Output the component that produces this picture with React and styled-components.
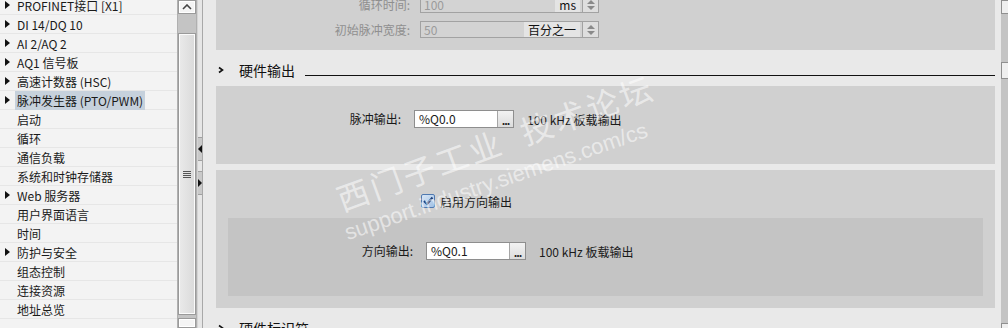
import React from "react";
import styled, { createGlobalStyle } from "styled-components";

const Global = createGlobalStyle`
  html, body { margin: 0; padding: 0; background: #e9e9e9; }
  body { font-family: "Noto Sans CJK SC", "Noto Sans", sans-serif; font-size: 12px; color: #1a1a1a; }
  * { box-sizing: border-box; }
`;

const Root = styled.div`
  display: flex;
  width: 1008px;
  height: 328px;
  overflow: hidden;
`;

/* ---------- left tree ---------- */
const TreePanel = styled.div`
  display: flex;
  width: 197px;
  background: #f3f3f3;
`;
const TreeList = styled.ul`
  list-style: none;
  margin: -4px 0 0;
  padding: 0;
  flex: 1;
  overflow: hidden;
`;
const TreeItem = styled.li`
  display: flex;
  align-items: center;
  height: 19px;
  padding-left: 5px;
  border-bottom: 1px solid #e6e6e6;
  line-height: 17px;
  white-space: nowrap;
`;
const Arrow = styled.span`
  width: 10px;
  height: 8px;
  flex: none;
  &::before {
    content: "";
    display: ${(p) => (p.$show ? "block" : "none")};
    width: 0;
    height: 0;
    border-left: 5px solid #111;
    border-top: 4px solid transparent;
    border-bottom: 4px solid transparent;
  }
`;
const TreeLabel = styled.span`
  padding: 1px 2px;
  background: ${(p) => (p.$selected ? "#c6d1dc" : "transparent")};
  color: #1a1a1a;
`;

const VScroll = styled.div`
  width: 20px;
  flex: none;
  display: flex;
  flex-direction: column;
  background: #c4c4c4;
  border-left: 1px solid #b0b0b0;
  border-right: 1px solid #b0b0b0;
`;
const ScrollBtn = styled.div`
  height: ${(p) => p.$h}px;
  flex: none;
  background: #f4f4f4;
  border: 1px solid #9a9a9a;
  box-shadow: inset 0 0 0 1px #fff;
  display: flex;
  align-items: center;
  justify-content: center;
`;
const ScrollGap = styled.div`
  height: ${(p) => p.$h}px;
  flex: none;
`;
const Thumb = styled.div`
  flex: 1;
  margin-bottom: 3px;
  border: 1px solid #9a9a9a;
  box-shadow: inset 0 0 0 1px #fbfbfb;
  background: linear-gradient(90deg, #eaeaea, #dadada);
  display: flex;
  align-items: center;
  justify-content: center;
`;
const Grip = styled.div`
  width: 8px;
  height: 7px;
  border-top: 1px solid #555;
  border-bottom: 1px solid #555;
  position: relative;
  &::before, &::after {
    content: "";
    position: absolute;
    left: 0;
    right: 0;
    height: 1px;
    background: #555;
  }
  &::before { top: 1px; }
  &::after { top: 3px; }
`;

/* ---------- splitter ---------- */
const Splitter = styled.div`
  width: 6px;
  flex: none;
  background: #e6e6e6;
  border-right: 1px solid #a8a8a8;
  border-left: 1px solid #d4d4d4;
  display: flex;
  flex-direction: column;
  padding-top: 137px;
  gap: 10px;
`;
const SplitBtn = styled.div`
  height: 24px;
  background: #c9c9c9;
  border-top: 1px solid #a0a0a0;
  border-bottom: 1px solid #a0a0a0;
  display: flex;
  align-items: center;
  justify-content: ${(p) => (p.$dir === "left" ? "flex-end" : "flex-start")};
  &::before {
    content: "";
    width: 0;
    height: 0;
    border-top: 4px solid transparent;
    border-bottom: 4px solid transparent;
    ${(p) => (p.$dir === "left" ? "border-right: 4px solid #111;" : "border-left: 4px solid #111;")}
  }
`;

/* ---------- content ---------- */
const Content = styled.div`
  flex: 1;
  position: relative;
  overflow: hidden;
  background: #e9e9e9;
  padding: 0 6px 0 13px;
`;
const Scroller = styled.div`
  margin-top: -10px;
  display: flex;
  flex-direction: column;
`;
const Panel = styled.div`
  background: #d0d0d0;
  height: ${(p) => p.$h}px;
  padding-top: ${(p) => p.$pt}px;
  margin-top: ${(p) => p.$mt || 0}px;
  display: flex;
  flex-direction: column;
`;
const InnerPanel = styled.div`
  background: #c4c4c4;
  margin: 10px 12px 0;
  height: 78px;
  padding-top: 24px;
`;

const TopRows = styled.div`
  display: grid;
  grid-template-columns: 194px 179px;
  column-gap: 10px;
  row-gap: 8px;
`;
const DimLabel = styled.div`
  text-align: right;
  color: #8f8f8f;
  line-height: 17px;
`;
const FieldBox = styled.div`
  display: flex;
  height: 17px;
  border: 1px solid #a2a2a2;
  background: #d3d3d3;
`;
const FieldValue = styled.div`
  flex: 1;
  padding-left: 3px;
  color: #9b9b9b;
  line-height: 15px;
`;
const Unit = styled.div`
  background: #e4e4e4;
  color: #111;
  padding: 0 4px;
  line-height: 15px;
  margin-right: 2px;
`;
const Spinner = styled.div`
  width: 16px;
  border-left: 1px solid #a2a2a2;
  background: #dedede;
  display: flex;
  flex-direction: column;
  align-items: center;
  justify-content: center;
  gap: 2px;
`;
const Tri = styled.span`
  width: 0;
  height: 0;
  border-left: 4px solid transparent;
  border-right: 4px solid transparent;
  ${(p) => (p.$up ? "border-bottom: 4px solid #8a8a8a;" : "border-top: 4px solid #8a8a8a;")}
`;

const SectionHeader = styled.div`
  height: 36px;
  padding: 12px 0 0 2px;
  display: flex;
  align-items: flex-start;
`;
const Chevron = styled.svg`
  width: 6px;
  height: 16px;
  flex: none;
`;
const SectionTitle = styled.div`
  font-size: 14px;
  line-height: 16px;
  margin: 0 10px 0 15px;
  color: #111;
  white-space: nowrap;
`;
const SectionLine = styled.div`
  flex: 1;
  height: 14px;
  border-bottom: 1px solid #111;
`;

const FormRow = styled.div`
  display: grid;
  grid-template-columns: 185px 100px auto;
  column-gap: 13px;
  align-items: center;
`;
const Label = styled.div`
  text-align: right;
  color: #1a1a1a;
  line-height: 18px;
`;
const Input = styled.div`
  display: flex;
  height: 18px;
  border: 1px solid #8e8e8e;
  background: #fff;
`;
const InputValue = styled.div`
  flex: 1;
  padding-left: 4px;
  line-height: 16px;
  color: #1a1a1a;
`;
const DotsBtn = styled.div`
  width: 16px;
  border-left: 1px solid #a6a6a6;
  background: linear-gradient(#f2f2f2, #dcdcdc);
  font-weight: bold;
  font-size: 11px;
  line-height: 19px;
  text-align: center;
  letter-spacing: -1px;
  color: #222;
`;
const Info = styled.div`
  color: #1a1a1a;
  white-space: nowrap;
`;

const CheckRow = styled.div`
  display: flex;
  align-items: center;
  margin-left: 205px;
  height: 14px;
  gap: 5px;
`;

const RightScroll = styled.div`
  width: 7px;
  flex: none;
  background: #c4c4c4;
  display: flex;
  flex-direction: column;
`;
const RBtn = styled.div`
  height: ${(p) => p.$h}px;
  margin-top: ${(p) => p.$mt || 0}px;
  background: #efefef;
  border: 1px solid #8f8f8f;
  border-right: none;
  flex: none;
`;

const Watermark = styled.div`
  position: absolute;
  left: ${(p) => p.$x}px;
  top: ${(p) => p.$y}px;
  transform: rotate(${(p) => p.$r}deg);
  transform-origin: 0 100%;
  color: rgba(255, 255, 255, 0.55);
  font-size: ${(p) => p.$size}px;
  font-family: ${(p) => p.$font};
  letter-spacing: ${(p) => p.$ls}px;
  white-space: pre;
  pointer-events: none;
  line-height: 1;
`;

const tree = [
  { t: "PROFINET接口 [X1]", a: true },
  { t: "DI 14/DQ 10", a: true },
  { t: "AI 2/AQ 2", a: true },
  { t: "AQ1 信号板", a: true },
  { t: "高速计数器 (HSC)", a: true },
  { t: "脉冲发生器 (PTO/PWM)", a: true, s: true },
  { t: "启动" },
  { t: "循环" },
  { t: "通信负载" },
  { t: "系统和时钟存储器" },
  { t: "Web 服务器", a: true },
  { t: "用户界面语言" },
  { t: "时间" },
  { t: "防护与安全", a: true },
  { t: "组态控制" },
  { t: "连接资源" },
  { t: "地址总览" },
];

const ChevronIcon = () => (
  <Chevron viewBox="0 0 6 16">
    <path d="M1 5.5 L4.5 8 L1 10.5" fill="none" stroke="#111" strokeWidth="1.6" />
  </Chevron>
);

const Checkbox = () => (
  <svg width="14" height="14" viewBox="0 0 14 14">
    <defs>
      <linearGradient id="cb" x1="0" y1="0" x2="1" y2="1">
        <stop offset="0" stopColor="#dbe8f7" />
        <stop offset="1" stopColor="#9fbfe3" />
      </linearGradient>
    </defs>
    <rect x="0.5" y="0.5" width="13" height="13" rx="1.5" fill="url(#cb)" stroke="#4f79b0" />
    <path d="M3 7 L6 10 L11.5 3.5" fill="none" stroke="#1e3f78" strokeWidth="2" />
  </svg>
);

const UpChevron = () => (
  <svg width="10" height="6" viewBox="0 0 10 6">
    <path d="M1 5 L5 1 L9 5" fill="none" stroke="#444" strokeWidth="1.6" />
  </svg>
);

export default function App() {
  return (
    <Root>
      <Global />
      <TreePanel>
        <TreeList>
          {tree.map((it) => (
            <TreeItem key={it.t}>
              <Arrow $show={!!it.a} />
              <TreeLabel $selected={!!it.s}>{it.t}</TreeLabel>
            </TreeItem>
          ))}
        </TreeList>
        <VScroll>
          <ScrollBtn $h={14}>
            <UpChevron />
          </ScrollBtn>
          <ScrollGap $h={19} />
          <Thumb>
            <Grip />
          </Thumb>
          <ScrollBtn $h={10} />
        </VScroll>
      </TreePanel>
      <Splitter>
        <SplitBtn $dir="left" />
        <SplitBtn $dir="right" />
      </Splitter>
      <Content>
        <Scroller>
          <Panel $h={60} $pt={6}>
            <TopRows>
              <DimLabel>循环时间:</DimLabel>
              <FieldBox>
                <FieldValue>100</FieldValue>
                <Unit>ms</Unit>
                <Spinner>
                  <Tri $up />
                  <Tri />
                </Spinner>
              </FieldBox>
              <DimLabel>初始脉冲宽度:</DimLabel>
              <FieldBox>
                <FieldValue>50</FieldValue>
                <Unit>百分之一</Unit>
                <Spinner>
                  <Tri $up />
                  <Tri />
                </Spinner>
              </FieldBox>
            </TopRows>
          </Panel>
          <SectionHeader>
            <ChevronIcon />
            <SectionTitle>硬件输出</SectionTitle>
            <SectionLine />
          </SectionHeader>
          <Panel $h={78} $pt={24}>
            <FormRow>
              <Label>脉冲输出:</Label>
              <Input>
                <InputValue>%Q0.0</InputValue>
                <DotsBtn>...</DotsBtn>
              </Input>
              <Info>100 kHz 板载输出</Info>
            </FormRow>
          </Panel>
          <Panel $h={138} $pt={24} $mt={6}>
            <CheckRow>
              <Checkbox />
              <span>启用方向输出</span>
            </CheckRow>
            <InnerPanel>
              <FormRow>
                <Label>方向输出:</Label>
                <Input>
                  <InputValue>%Q0.1</InputValue>
                  <DotsBtn>...</DotsBtn>
                </Input>
                <Info>100 kHz 板载输出</Info>
              </FormRow>
            </InnerPanel>
          </Panel>
          <SectionHeader>
            <ChevronIcon />
            <SectionTitle>硬件标识符</SectionTitle>
          </SectionHeader>
        </Scroller>
        <Watermark
          $x={140}
          $y={182}
          $r={-20}
          $size={32}
          $ls={3}
          $font={'"Noto Sans CJK SC", sans-serif'}
        >
          {"西门子工业  技术论坛"}
        </Watermark>
        <Watermark
          $x={146}
          $y={222}
          $r={-19}
          $size={22}
          $ls={0}
          $font={'"Liberation Sans", sans-serif'}
        >
          support.industry.siemens.com/cs
        </Watermark>
      </Content>
      <RightScroll>
        <RBtn $h={14} />
        <RBtn $h={17} $mt={48} />
        <RBtn $h={10} $mt={244} />
      </RightScroll>
    </Root>
  );
}
